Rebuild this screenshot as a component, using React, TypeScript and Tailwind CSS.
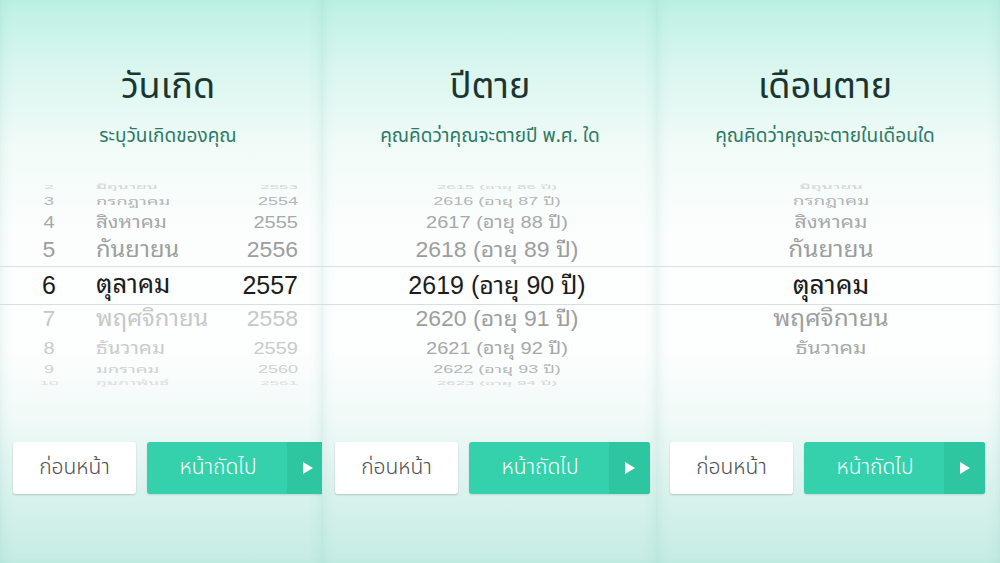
const ROW_STYLES = [
  { cls: 'h-[12px] text-[17px] scale-y-[0.35]', up: 'text-[#d3d6d6]', down: 'text-[#dcdede]' },
  { cls: 'h-[16px] text-[18px] scale-y-[0.6]', up: 'text-[#b3b6b6]', down: 'text-[#cfd1d1]' },
  { cls: 'h-[26px] text-[20px] scale-y-[0.85]', up: 'text-[#a6a8a8]', down: 'text-[#c9cbcb]' },
  { cls: 'h-[31px] text-[23px] scale-y-[0.93]', up: 'text-[#9c9e9e]', down: 'text-[#c6c8c8]' },
  { cls: 'h-[38px] text-[25px]', up: 'text-[#1c1c1c]', down: 'text-[#1c1c1c]' },
  { cls: 'h-[31px] text-[23px] scale-y-[0.93]', up: 'text-[#9c9e9e]', down: 'text-[#c6c8c8]' },
  { cls: 'h-[26px] text-[20px] scale-y-[0.85]', up: 'text-[#a6a8a8]', down: 'text-[#c9cbcb]' },
  { cls: 'h-[17px] text-[18px] scale-y-[0.6]', up: 'text-[#b3b6b6]', down: 'text-[#cfd1d1]' },
  { cls: 'h-[10px] text-[17px] scale-y-[0.35]', up: 'text-[#d3d6d6]', down: 'text-[#dcdede]' },
];

const DAYS = ['2', '3', '4', '5', '6', '7', '8', '9', '10'];
const MONTHS = ['มิถุนายน', 'กรกฎาคม', 'สิงหาคม', 'กันยายน', 'ตุลาคม', 'พฤศจิกายน', 'ธันวาคม', 'มกราคม', 'กุมภาพันธ์'];
const YEARS = ['2553', '2554', '2555', '2556', '2557', '2558', '2559', '2560', '2561'];
const DEATH_YEARS = [86, 87, 88, 89, 90, 91, 92, 93, 94].map(a => `${2529 + a} (อายุ ${a} ปี)`);
const DEATH_MONTHS = ['มิถุนายน', 'กรกฎาคม', 'สิงหาคม', 'กันยายน', 'ตุลาคม', 'พฤศจิกายน', 'ธันวาคม', '', ''];

const pickerFont = "font-['Liberation_Sans','Noto_Sans_Thai_Looped','Noto_Sans_Thai','DejaVu_Sans',sans-serif]";
const uiFont = "font-['Noto_Sans_Thai','Noto_Sans','DejaVu_Sans',sans-serif]";

function rowColor(i: number, fadeBelow: boolean) {
  const r = ROW_STYLES[i];
  return i > 4 && fadeBelow ? r.down : r.up;
}

function Picker({ children }: { children: React.ReactNode }) {
  return (
    <div className={`relative mt-[31px] h-[207px] ${pickerFont}`}>
      {/* selection lines */}
      <div className="absolute -left-[20px] -right-[20px] top-[85px] h-[39px] border-y border-[#d9dfde]" />
      {children}
    </div>
  );
}

function BirthPicker() {
  return (
    <Picker>
      <div className="flex flex-col">
        {ROW_STYLES.map((r, i) => (
          <div key={i} className={`flex items-center leading-none ${r.cls} ${rowColor(i, true)}`}>
            <span className="w-[60px] pl-[12px] text-center">{DAYS[i]}</span>
            <span className="w-[100px] pl-[23px] whitespace-nowrap text-[1.03em] font-normal">{MONTHS[i]}</span>
            <span className="flex-1 pr-[25px] text-right">{YEARS[i]}</span>
          </div>
        ))}
      </div>
    </Picker>
  );
}

function CenterPicker({ items, shift, thai }: { items: string[]; shift: string; thai?: boolean }) {
  return (
    <Picker>
      <div className={`flex flex-col ${shift}`}>
        {ROW_STYLES.map((r, i) => (
          <div key={i} className={`flex items-center justify-center leading-none whitespace-nowrap ${r.cls} ${rowColor(i, false)}`}>
            <span className={thai ? 'text-[1.06em]' : ''}>{items[i]}</span>
          </div>
        ))}
      </div>
    </Picker>
  );
}

function Buttons() {
  return (
    <div className={`mt-[54px] flex gap-[11px] ${uiFont}`}>
      <button className="h-[52px] w-[123px] shrink-0 rounded-[3px] bg-white text-[21px] font-light text-[#4d4d4d] shadow-[0_1px_2px_rgba(0,0,0,0.18)]">
        ก่อนหน้า
      </button>
      <button className="flex h-[52px] w-[181px] shrink-0 overflow-hidden rounded-[3px] bg-[#34d1ac] text-white shadow-[0_1px_2px_rgba(0,0,0,0.12)]">
        <span className="flex h-full flex-1 items-center justify-center pl-[2px] text-[21px] font-light">หน้าถัดไป</span>
        <span className="flex h-full w-[41px] items-center justify-center bg-[#2ec5a1]">
          <svg width="10" height="12" viewBox="0 0 10 12"><path d="M0 0 L10 6 L0 12 Z" fill="#fff" /></svg>
        </span>
      </button>
    </div>
  );
}

function Screen({ title, subtitle, width, children }: { title: string; subtitle: string; width: string; children: React.ReactNode }) {
  return (
    <div className={`relative h-[563px] ${width} shrink-0 overflow-hidden bg-[linear-gradient(to_bottom,#bcf1e4_0%,#d9f6ef_12%,#f1fbf8_26%,#fcfefe_42%,#fdfefe_62%,#f1faf8_74%,#dcf3ee_86%,#c4ece4_100%)] shadow-[inset_8px_0_12px_-8px_rgba(120,190,180,0.25),inset_-8px_0_12px_-8px_rgba(120,190,180,0.25)]`}>
      <div className="w-[336px] px-[13px] pt-[62px]">
        <div className={`h-[50px] text-center text-[36px] font-normal leading-[50px] text-[#1b3630] ${uiFont}`}>{title}</div>
        <div className={`mt-[12px] h-[26px] text-center text-[19px] font-normal leading-[26px] text-[#2c7a66] ${uiFont}`}>{subtitle}</div>
        {children}
        <Buttons />
      </div>
    </div>
  );
}

export default function App() {
  return (
    <div className="flex h-[563px] w-[1000px] overflow-hidden bg-white">
      <Screen title="วันเกิด" subtitle="ระบุวันเกิดของคุณ" width="w-[322px]">
        <BirthPicker />
      </Screen>
      <Screen title="ปีตาย" subtitle="คุณคิดว่าคุณจะตายปี พ.ศ. ใด" width="w-[335px]">
        <CenterPicker items={DEATH_YEARS} shift="pl-[14px]" />
      </Screen>
      <Screen title="เดือนตาย" subtitle="คุณคิดว่าคุณจะตายในเดือนใด" width="w-[343px]">
        <CenterPicker items={DEATH_MONTHS} shift="pl-[12px]" thai />
      </Screen>
    </div>
  );
}
